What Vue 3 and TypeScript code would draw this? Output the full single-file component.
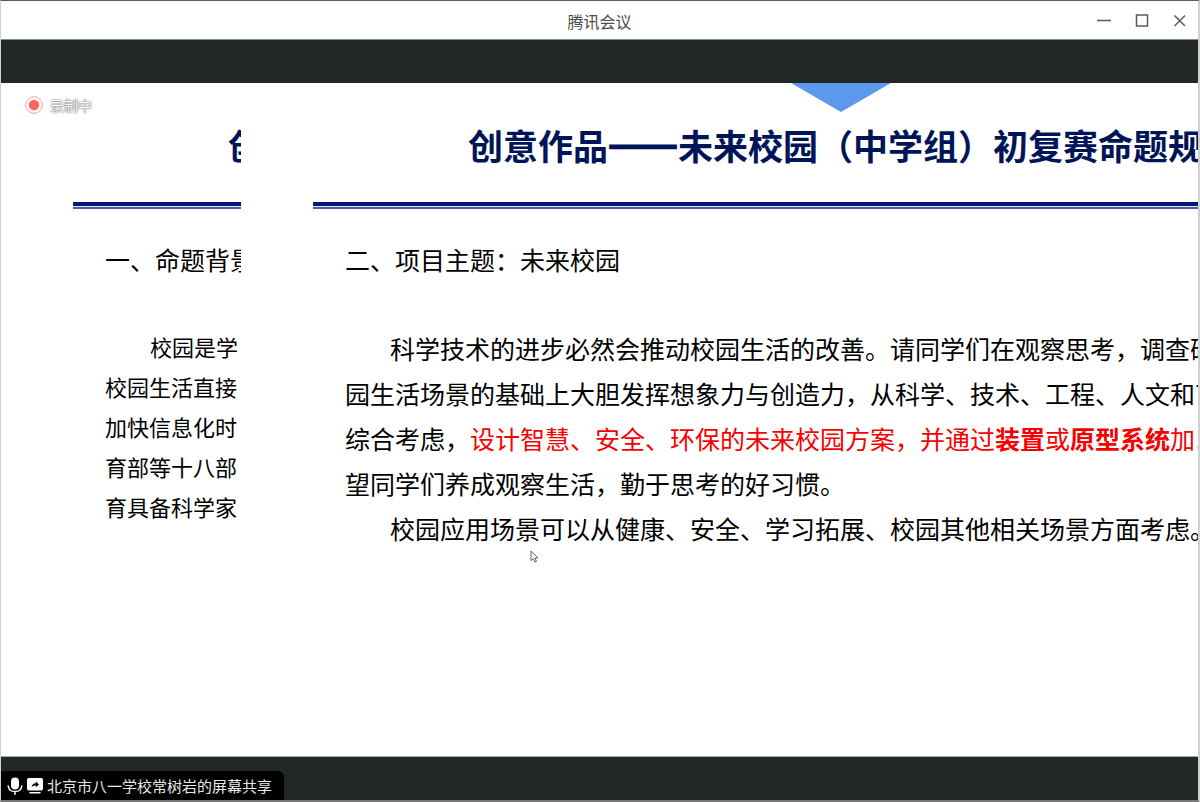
<script setup lang="ts">
interface Run {
  text: string
  tone?: 'red' | 'strong'
}
interface Line {
  indent?: boolean
  runs: Run[]
}

const previousLines: Line[] = [
  { indent: true, runs: [{ text: '校园是学' }] },
  { runs: [{ text: '校园生活直接' }] },
  { runs: [{ text: '加快信息化时' }] },
  { runs: [{ text: '育部等十八部' }] },
  { runs: [{ text: '育具备科学家' }] },
]

const currentLines: Line[] = [
  { indent: true, runs: [{ text: '科学技术的进步必然会推动校园生活的改善。请同学们在观察思考，调查研' }] },
  { runs: [{ text: '园生活场景的基础上大胆发挥想象力与创造力，从科学、技术、工程、人文和艺' }] },
  {
    runs: [
      { text: '综合考虑，' },
      { text: '设计智慧、安全、环保的未来校园方案，并通过', tone: 'red' },
      { text: '装置', tone: 'strong' },
      { text: '或', tone: 'red' },
      { text: '原型系统', tone: 'strong' },
      { text: '加以', tone: 'red' },
    ],
  },
  { runs: [{ text: '望同学们养成观察生活，勤于思考的好习惯。' }] },
  { indent: true, runs: [{ text: '校园应用场景可以从健康、安全、学习拓展、校园其他相关场景方面考虑。' }] },
]
</script>

<template>
  <div class="window" lang="zh-CN">
    <header class="titlebar">
      <h1 class="app-name">腾讯会议</h1>
      <div class="controls">
        <button type="button" aria-label="最小化">
          <svg width="16" height="16" viewBox="0 0 16 16"><path d="M1 8.500h14" /></svg>
        </button>
        <button type="button" aria-label="最大化">
          <svg width="16" height="16" viewBox="0 0 16 16"><path d="M2.500 3h11v11h-11z" /></svg>
        </button>
        <button type="button" aria-label="关闭">
          <svg width="16" height="16" viewBox="0 0 16 16"><path d="M2.500 3.500l10.500 10.500M13 3.500l-10.500 10.500" /></svg>
        </button>
      </div>
    </header>

    <div class="strip"></div>

    <main class="stage">
      <section class="slide previous">
        <h2 class="slide-title">创</h2>
        <div class="rule"></div>
        <h3 class="topic">一、命题背景</h3>
        <div class="body">
          <p v-for="(line, i) in previousLines" :key="i" :class="{ indent: line.indent }">
            <span v-for="(run, j) in line.runs" :key="j">{{ run.text }}</span>
          </p>
        </div>
      </section>

      <section class="slide current">
        <h2 class="slide-title">创意作品<span class="dash">——</span>未来校园（中学组）初复赛命题规</h2>
        <div class="rule"></div>
        <h3 class="topic">二、项目主题：未来校园</h3>
        <div class="body">
          <p v-for="(line, i) in currentLines" :key="i" :class="{ indent: line.indent }">
            <span v-for="(run, j) in line.runs" :key="j" :class="run.tone">{{ run.text }}</span>
          </p>
        </div>
      </section>

      <svg class="marker" width="100" height="29" viewBox="0 0 100 29" aria-hidden="true">
        <path d="M0 0h100L50 29z" fill="#5b98ee" />
      </svg>

      <div class="recording">
        <svg width="18" height="18" viewBox="0 0 18 18" aria-hidden="true">
          <circle cx="9" cy="9" r="8.300" fill="#fff" stroke="#ff9d97" stroke-width="1" />
          <circle cx="9" cy="9" r="5.200" fill="#ff655e" />
        </svg>
        <span>录制中</span>
      </div>

      <svg class="pointer" width="9" height="13" viewBox="0 0 9 13" aria-hidden="true">
        <path d="M1 1v9.600l2.300-2.100 1.600 3.600 1.600-.7-1.600-3.400H8z" fill="#fff" stroke="#555" stroke-width=".9" />
      </svg>
    </main>

    <footer class="bottom">
      <div class="sharer">
        <svg width="16" height="18" viewBox="0 0 16 18" aria-hidden="true">
          <rect x="4" y="0.500" width="8" height="12" rx="4" fill="#fff" />
          <path d="M1.200 9c.5 3.600 3.200 5.600 6.800 5.600s6.300-2 6.800-5.600M8 14.600v2.600" fill="none" stroke="#fff" stroke-width="1.500" stroke-linecap="round" />
        </svg>
        <svg width="16" height="16" viewBox="0 0 16 16" aria-hidden="true">
          <rect x="0" y="0" width="16" height="12.500" rx="1.800" fill="#fff" />
          <path d="M3 14.800h10" stroke="#fff" stroke-width="1.500" stroke-linecap="round" />
          <path d="M4.500 9.200C5 6.600 6.500 5.300 8.800 5.200V3.500l3.200 2.900-3.200 2.800V7.400C7 7.300 5.700 7.900 4.500 9.200z" fill="#000" />
        </svg>
        <span>北京市八一学校常树岩的屏幕共享</span>
      </div>
    </footer>
  </div>
</template>

<style>
body {
  margin: 0;
  overflow: hidden;
}
</style>

<style scoped>
.window {
  box-sizing: border-box;
  height: 100vh;
  display: flex;
  flex-direction: column;
  border: solid #d0d0d0;
  border-width: 1px 2px 2px 1px;
  border-top-color: #5c5c5c;
  border-bottom-color: #777;
  background: #fff;
  color: #000;
  font-family: "Noto Sans CJK SC", sans-serif;
  font-kerning: none;
  font-variant-ligatures: none;
  overflow: hidden;
}
h1,
h2,
h3,
p {
  margin: 0;
  font-weight: 400;
  white-space: nowrap;
}
.titlebar {
  display: grid;
  grid-template-columns: 1fr auto 1fr;
  align-items: center;
  height: 38px;
  border-bottom: 1px solid #8a8a8a;
}
.app-name {
  grid-column: 2;
  padding-top: 2px;
  font-size: 16px;
  line-height: 24px;
  color: #4c4c4c;
}
.controls {
  display: flex;
  justify-content: flex-end;
  gap: 22px;
  padding-right: 10px;
}
.controls button {
  display: flex;
  padding: 0;
  border: 0;
  background: none;
}
.controls path {
  fill: none;
  stroke: #5a5a5a;
  stroke-width: 1.5;
}
.strip {
  height: 43px;
  background: #222728;
}
.stage {
  position: relative;
  flex: 1;
  display: flex;
  min-height: 0;
  border-bottom: 1px solid #aaa;
  overflow: hidden;
}
.slide {
  box-sizing: border-box;
  padding: 36px 0 0 72px;
  overflow: hidden;
}
.previous {
  flex: 0 0 240px;
}
.current {
  flex: 1;
  min-width: 0;
}
.slide-title {
  padding-left: 155px;
  font-size: 35px;
  line-height: 52px;
  font-weight: 700;
  color: #001458;
}
.dash {
  -webkit-text-stroke: 3px #001458;
}
.rule {
  height: 1px;
  margin-top: 31px;
  border-top: 4px solid #00187c;
  border-bottom: 2px solid #4a60a0;
  background: #dbe5fa;
}
.topic {
  padding: 30px 0 0 32px;
  font-size: 25px;
  line-height: 40px;
}
.body {
  padding: 47px 0 0 32px;
}
.indent {
  text-indent: 45px;
}
.previous .body {
  font-size: 22px;
  line-height: 40px;
}
.current .body {
  font-size: 25px;
  line-height: 45px;
}
.red {
  color: #f60000;
}
.strong {
  color: #f60000;
  font-weight: 700;
}
.marker {
  position: absolute;
  top: 0;
  left: 790px;
}
.recording {
  position: absolute;
  top: 13px;
  left: 24px;
  display: flex;
  align-items: center;
  gap: 7px;
  font-size: 14px;
  line-height: 18px;
  color: #fff;
  text-shadow: 0 0 1px #555, 0 0 2px #666;
}
.pointer {
  position: absolute;
  top: 467px;
  left: 529px;
}
.bottom {
  display: flex;
  align-items: flex-end;
  height: 43px;
  background: #222728;
}
.sharer {
  display: flex;
  align-items: center;
  gap: 4px;
  height: 29px;
  padding: 0 12px 0 6px;
  border-top-right-radius: 6px;
  background: #000;
  color: #e8e8e8;
  font-size: 15px;
  line-height: 24px;
}
</style>
